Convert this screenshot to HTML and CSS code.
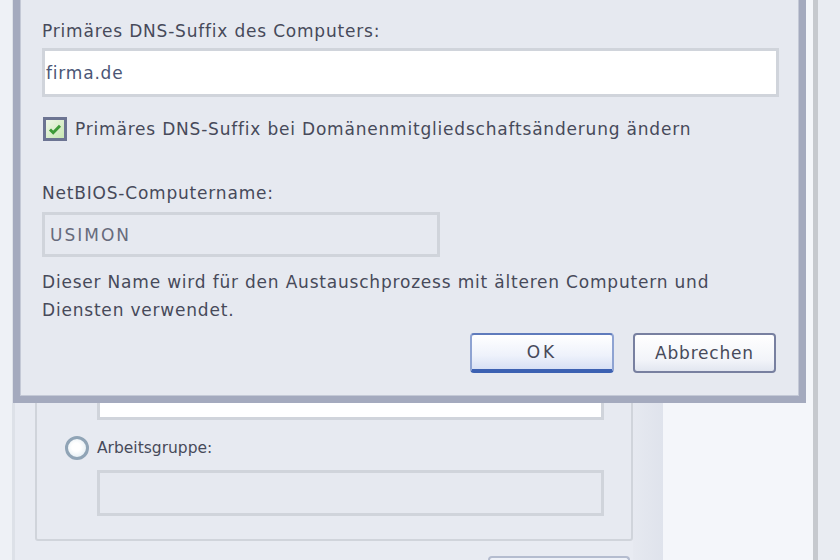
FILE: index.html
```html
<!doctype html>
<html lang="de">
<head>
    <meta charset="UTF-8">
    <title>Computername ändern</title>
    <link rel="stylesheet" href="styles.css">
</head>
<body>
    <div class="desk">
        <div class="backwin">
            <div class="back-body">
                <div class="group">
                    <div class="field white"></div>
                    <div class="radio-row"><span class="radio"></span>Arbeitsgruppe:</div>
                    <div class="field sunken"></div>
                </div>
                <div class="back-buttons"><span class="btn"></span></div>
            </div>
            <div class="side-gap"></div>
            <div class="side-panel"></div>
        </div>
        <div class="edge"></div>
        <div class="outside"></div>
    </div>

    <div class="dialog">
        <div class="label">Primäres DNS-Suffix des Computers:</div>
        <div class="input wide">firma.de</div>

        <div class="check-row">
            <svg class="checkbox" viewBox="0 0 24 24">
                <defs>
                    <linearGradient id="cb" x1="0" y1="0" x2="1" y2="1">
                        <stop offset="0" stop-color="#f2f7ec"/>
                        <stop offset="1" stop-color="#c4e6ae"/>
                    </linearGradient>
                </defs>
                <rect x="1.5" y="1.5" width="21" height="21" fill="url(#cb)" stroke="#6c7492" stroke-width="3"/>
                <path d="M7 12.5l3.2 3.2 6.8-7" fill="none" stroke="#3d9a38" stroke-width="3"/>
            </svg>
            <span>Primäres DNS-Suffix bei Domänenmitgliedschaftsänderung ändern</span>
        </div>

        <div class="label netbios">NetBIOS-Computername:</div>
        <div class="input narrow disabled">USIMON</div>

        <p class="note">Dieser Name wird für den Austauschprozess mit älteren Computern und<br>Diensten verwendet.</p>

        <div class="buttons">
            <button class="button default">OK</button>
            <button class="button">Abbrechen</button>
        </div>
    </div>
</body>
</html>
```

FILE: styles.css
```css
:root {
    --cl-dialog: #e6e9f0;
    --cl-frame: #a4aabe;
    --cl-field-border: #d0d4db;
    --cl-text: #474a5a;
    --cl-text-disabled: #676b7c;
}

html, body {
    margin: 0;
    padding: 0;
    width: 840px;
    height: 560px;
    overflow: hidden;
    font-family: 'DejaVu Sans', sans-serif;
    font-size: 17px;
    letter-spacing: 0.8px;
    color: var(--cl-text);
}

body {
    position: relative;
}

/* window behind the dialog */

.desk {
    display: flex;
    height: 560px;
    overflow: hidden;
}

.backwin {
    display: flex;
    width: 813px;
}

.back-body {
    width: 633px;
    box-sizing: border-box;
    padding-left: 35px;
    overflow: hidden;
    background: linear-gradient(to right, #eef1f6 0 12px, #dde1e8 12px 15px, #e8ebf2 15px);
}

.group {
    margin-top: 360px;
    box-sizing: border-box;
    border: solid 2px var(--cl-field-border);
    border-radius: 3px;
    padding: 12px 0 23px 60px;
    background: #e7eaf1;
}

.field {
    width: 507px;
    height: 46px;
    box-sizing: border-box;
    border: solid 3px var(--cl-field-border);
}

.field.white {
    background: white;
}

.field.sunken {
    background: #e6e9f0;
}

.radio-row {
    display: flex;
    align-items: center;
    gap: 8px;
    height: 26px;
    margin: 15px 0 9px -32px;
    font-size: 15.5px;
    letter-spacing: 0;
}

.radio {
    width: 24px;
    height: 24px;
    box-sizing: border-box;
    border-radius: 50%;
    border: solid 3px #90a4b6;
    background: radial-gradient(circle at 45% 45%, #ffffff 30%, #d9e6ee);
}

.back-buttons {
    display: flex;
    justify-content: flex-end;
    padding-right: 3px;
    margin-top: 15px;
}

.back-buttons .btn {
    width: 142px;
    height: 4px;
    box-sizing: border-box;
    border: solid 2px #b4bccf;
    border-bottom: none;
    border-radius: 4px 4px 0 0;
    background: #eef1f8;
}

.side-gap {
    width: 30px;
    background: linear-gradient(to right, #e6e9f0, #dfe3ec);
}

.side-panel {
    flex: 1;
    background: #f4f6fa;
}

.edge {
    width: 5px;
    background: #c6c9ce;
}

.outside {
    flex: 1;
    background: #e9ecf2;
}

/* the dialog */

.dialog {
    position: absolute;
    left: 13px;
    top: 0;
    width: 793px;
    height: 403px;
    box-sizing: border-box;
    border: solid 7px var(--cl-frame);
    border-top: none;
    box-shadow: inset 0 -1px 0 #c4c9d6, inset 1px 0 0 #c4c9d6, inset -1px 0 0 #c4c9d6;
    background: var(--cl-dialog);
    padding: 19px 23px 0 22px;
}

.label {
    line-height: 24px;
}

.input {
    box-sizing: border-box;
    border: solid 3px var(--cl-field-border);
    background: white;
    display: flex;
    align-items: center;
    padding-left: 1px;
}

.input.wide {
    width: 737px;
    height: 49px;
    margin-top: 5px;
    color: #4b5676;
}

.input.narrow {
    width: 398px;
    height: 45px;
    padding-left: 5px;
    letter-spacing: 2px;
}

.input.disabled {
    background: var(--cl-dialog);
    color: var(--cl-text-disabled);
}

.check-row {
    display: flex;
    align-items: center;
    gap: 8px;
    height: 30px;
    margin-top: 17px;
}

.checkbox {
    width: 24px;
    height: 24px;
    margin-left: 1px;
}

.netbios {
    margin-top: 37px;
    margin-bottom: 7px;
}

.note {
    margin: 11px 0 0;
    line-height: 28px;
}

.buttons {
    display: flex;
    justify-content: flex-end;
    gap: 19px;
    margin-top: 9px;
}

.button {
    height: 40px;
    box-sizing: border-box;
    font: inherit;
    letter-spacing: 0.8px;
    color: var(--cl-text);
    border: solid 2px #7880a0;
    border-radius: 4px;
    background: linear-gradient(#ffffff, #f2f4f9 70%, #e2e6f0);
    padding: 0;
}

.button.default {
    width: 144px;
    border-color: #5f7bbc #8ea3d2 #3c61b2 #8ea3d2;
    border-bottom-width: 4px;
    background: linear-gradient(#ffffff, #eef2fb 60%, #d7e0f4);
    letter-spacing: 3px;
}

.button:not(.default) {
    width: 143px;
}
```
